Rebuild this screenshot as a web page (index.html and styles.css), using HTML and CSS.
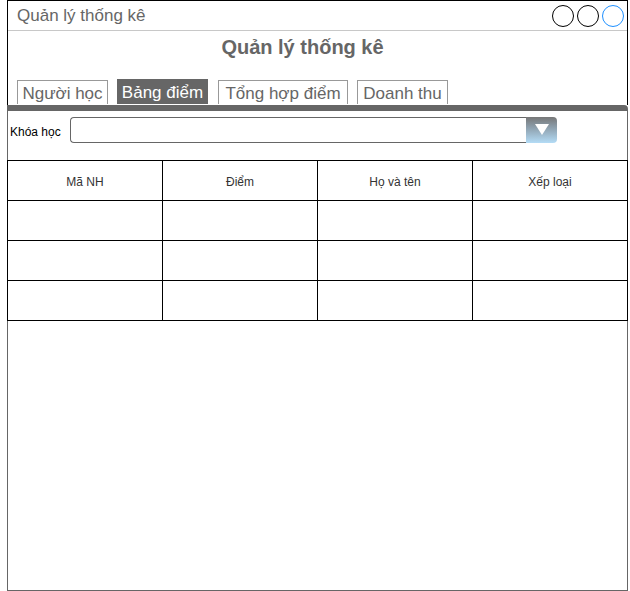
FILE: index.html
```html
<!DOCTYPE html>
<html lang="vi">
<head>
<meta charset="utf-8">
<link rel="stylesheet" href="styles.css">
</head>
<body>
<div class="window">
  <div class="top">
    <div class="titlebar">
      <span class="title">Quản lý thống kê</span>
      <div class="controls">
        <span class="circle"></span>
        <span class="circle"></span>
        <span class="circle blue"></span>
      </div>
    </div>
    <h1 class="heading">Quản lý thống kê</h1>
    <div class="tabs">
      <span class="tab t1">Người học</span>
      <span class="tab t2 active">Bảng điểm</span>
      <span class="tab t3">Tổng hợp điểm</span>
      <span class="tab t4">Doanh thu</span>
    </div>
  </div>
  <div class="bar"></div>
  <div class="panel">
    <div class="filter">
      <span class="label">Khóa học</span>
      <div class="combo">
        <div class="combo-field"></div>
        <div class="combo-btn"><span class="arrow"></span></div>
      </div>
    </div>
    <table class="grid">
      <tr class="head"><td>Mã NH</td><td>Điểm</td><td>Họ và tên</td><td>Xếp loại</td></tr>
      <tr><td></td><td></td><td></td><td></td></tr>
      <tr><td></td><td></td><td></td><td></td></tr>
      <tr><td></td><td></td><td></td><td></td></tr>
    </table>
  </div>
</div>
</body>
</html>
```

FILE: styles.css
```css
* { box-sizing: border-box; }
html, body { margin: 0; padding: 0; background: #fff; }
body { font-family: "Liberation Sans", Arial, sans-serif; }

.window {
  margin-left: 7px;
  width: 621px;
  height: 591px;
  display: flex;
  flex-direction: column;
}

.top {
  border: 1px solid #000;
  border-bottom: none;
  height: 105px;
  display: flex;
  flex-direction: column;
}

.titlebar {
  height: 30px;
  border-bottom: 1px solid #c8c8c8;
  display: flex;
  align-items: center;
  justify-content: space-between;
  padding: 0 3px 0 9px;
}
.title { font-size: 17px; color: #666; }
.controls { display: flex; gap: 3px; align-items: center; }
.circle {
  width: 22px; height: 22px;
  border: 1.3px solid #000;
  border-radius: 50%;
}
.circle.blue { border-color: #1e90ff; }

.heading {
  margin: 0;
  height: 49px;
  padding-top: 5px;
  padding-right: 30px;
  text-align: center;
  font-size: 20px;
  font-weight: bold;
  color: #666;
  line-height: 22px;
}

.tabs {
  display: flex;
  align-items: flex-end;
  padding-left: 9px;
  height: 24px;
}
.tab {
  height: 24px;
  border: 1px solid #999;
  border-bottom: none;
  font-size: 17px;
  color: #666;
  display: flex;
  align-items: center;
  justify-content: center;
  line-height: 1;
  padding-top: 2px;
}
.t1 { width: 91px; }
.t2 { width: 91px; margin-left: 9px; }
.t3 { width: 130px; margin-left: 10px; }
.t4 { width: 91px; margin-left: 9px; }
.tab.active {
  background: #666;
  color: #fff;
  border-color: #666;
  height: 25px;
  padding-top: 1px;
}

.bar {
  height: 6px;
  background: #666;
  border-top-right-radius: 4px;
}

.panel {
  flex: 1;
  border: 1px solid #666;
  border-top: none;
}

.filter {
  display: flex;
  align-items: center;
  height: 49px;
  padding: 0 0 12px 2px;
  margin-top: 0;
}
.label { font-size: 12px; color: #000; width: 60px; padding-top: 5px; }
.combo {
  display: flex;
  width: 487px;
  height: 26px;
}
.combo-field {
  flex: 1;
  border: 1px solid #666;
  border-right: none;
  border-radius: 4px 0 0 4px;
}
.combo-btn {
  width: 31px;
  border-radius: 0 4px 4px 0;
  background: linear-gradient(#777 0%, #8a9aa6 35%, #b4dcf6 100%);
  display: flex;
  align-items: center;
  justify-content: center;
}
.arrow {
  width: 0; height: 0;
  border-left: 7px solid transparent;
  border-right: 7px solid transparent;
  border-top: 11px solid #fff;
}

.grid {
  border-collapse: collapse;
  margin-left: -1px;
  width: 621px;
  table-layout: fixed;
}
.grid td {
  border: 1px solid #000;
  height: 40px;
  text-align: center;
  font-size: 12px;
  color: #333;
  padding: 0;
}
.grid .head td { padding-top: 2px; }
```
